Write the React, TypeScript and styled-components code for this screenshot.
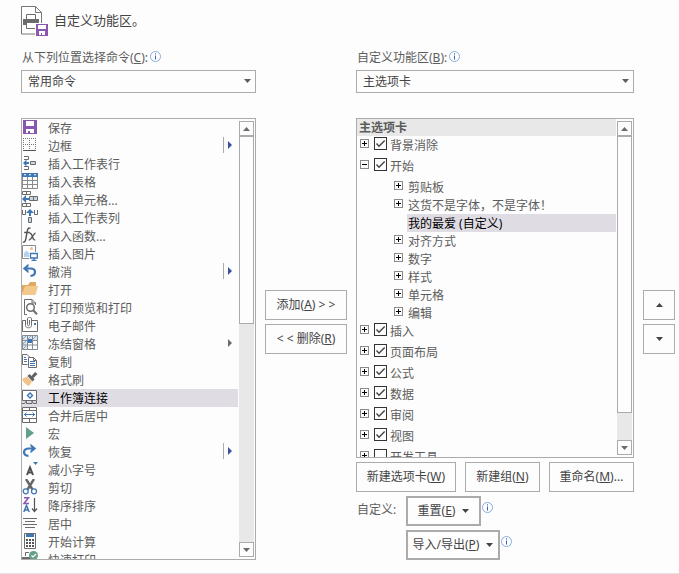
import React, { useState } from 'react';
import styled, { createGlobalStyle, css } from 'styled-components';

const GlobalStyle = createGlobalStyle`
  *, *::before, *::after { box-sizing: border-box; }
  body {
    margin: 0;
    background: #fdfdfd;
    color: #5c5c5c;
    font: 12px/18px "Noto Sans", "Noto Sans CJK SC", sans-serif;
  }
  button, select, input { font: inherit; margin: 0; }
`;

const line = '#ababab';
const blue = '#3f76b5';
const gray = '#6b6b6b';
const purple = '#8a57b0';

/* ---------- layout ---------- */

const Page = styled.main`
  display: flex;
  flex-direction: column;
  height: 100vh;
  min-height: 440px;
  padding: 6px 4px 13px 21px;
  border-bottom: 1px solid #e3e3e3;
`;

const Header = styled.header`
  display: flex;
  gap: 6px;
  height: 30px;
  margin-bottom: 12px;
`;

const Title = styled.h1`
  margin: 0;
  font-size: 13px;
  font-weight: 400;
  line-height: 28px;
  color: #444;
`;

const Columns = styled.div`
  flex: 1;
  min-height: 0;
  display: grid;
  grid-template-columns: minmax(0, 235fr) 82px minmax(0, 278fr) 32px;
  grid-template-rows: minmax(0, 1fr);
  column-gap: 9px;
`;

const Column = styled.section`
  display: flex;
  flex-direction: column;
  min-height: 0;
`;

const MidColumn = styled.div`
  display: flex;
  flex-direction: column;
  justify-content: center;
  gap: 4px;
  padding-top: 36px;
`;

const LabelRow = styled.div`
  display: flex;
  align-items: flex-start;
  gap: 2px;
  height: 22px;
  padding-left: 1px;
  line-height: 20px;
`;

const InfoButton = styled.button`
  display: flex;
  flex: none;
  padding: 0;
  border: 0;
  margin-top: 3px;
  background: none;
`;

const SelectBox = styled.div`
  position: relative;
  height: 23px;
  margin-bottom: 25px;
  flex: none;

  svg {
    position: absolute;
    right: 5px;
    top: 9px;
    pointer-events: none;
  }
`;

const Select = styled.select`
  appearance: none;
  display: block;
  width: 100%;
  height: 100%;
  padding: 0 20px 0 6px;
  border: 1px solid ${line};
  border-radius: 0;
  background: #fdfdfd;
  color: #444;
`;

/* ---------- lists ---------- */

const Panel = styled.div`
  flex: 1;
  min-height: 0;
  display: flex;
  border: 1px solid ${line};
  background: #fdfdfd;
`;

const Items = styled.ul`
  flex: 1;
  min-width: 0;
  margin: 0;
  padding: 0;
  list-style: none;
  overflow: hidden;
`;

const highlighted = css`
  background: #dfdde3;
  color: #000;
`;

const Command = styled.li<{ $selected: boolean }>`
  display: flex;
  height: 18px;
  padding-right: 6px;
  line-height: 20px;
  white-space: nowrap;
  cursor: default;
  ${(p) => p.$selected && highlighted}
`;

const CommandName = styled.span`
  flex: 1;
  padding-left: 10px;
`;

const Flyout = styled.span<{ $split: boolean }>`
  display: flex;
  align-items: center;
  height: 16px;
  padding-left: 4px;
  border-left: 1px solid ${(p) => (p.$split ? line : 'transparent')};
  color: ${(p) => (p.$split ? '#3c50a0' : '#6b6b6b')};
`;

const Bar = styled.div`
  display: flex;
  flex-direction: column;
  width: 15px;
  margin: 2px 1px 2px 1px;
  background: #e8e8e8;
`;

const BarButton = styled.button`
  display: flex;
  align-items: center;
  justify-content: center;
  flex: none;
  width: 15px;
  height: 15px;
  padding: 0;
  border: 1px solid ${line};
  background: #fdfdfd;
  color: #6b6b6b;
`;

const Thumb = styled.div<{ $share: number }>`
  flex: ${(p) => p.$share} 1 0;
  border: 1px solid ${line};
  background: #fdfdfd;
`;

const Track = styled.div<{ $share: number }>`
  flex: ${(p) => p.$share} 1 0;
`;

const TreeHeader = styled.li`
  height: 17px;
  padding-left: 2px;
  background: #e8e8e8;
  font-weight: 700;
  line-height: 17px;
`;

const TabRow = styled.div`
  display: flex;
  align-items: flex-start;
  height: 21px;
  padding: 1px 0 0 3px;
`;

const TabLabel = styled.label`
  display: flex;
  align-items: flex-start;
  gap: 3px;
  margin-left: 5px;
  line-height: 17px;
`;

const Check = styled.input`
  appearance: none;
  width: 13px;
  height: 13px;
  border: 1px solid #333;
  background: #fdfdfd center / 11px 11px no-repeat;

  &:checked {
    background-image: url("data:image/svg+xml,%3Csvg xmlns='http://www.w3.org/2000/svg' viewBox='0 0 11 11'%3E%3Cpath d='M1.5 5.5L4 8.2L9.7 2.4' fill='none' stroke='%23444' stroke-width='1.4'/%3E%3C/svg%3E");
  }
`;

const Groups = styled.ul`
  margin: 0;
  padding: 0 0 0 37px;
  list-style: none;
`;

const GroupRow = styled.li`
  display: flex;
  align-items: flex-start;
  height: 18px;
`;

const GroupName = styled.span<{ $selected: boolean }>`
  flex: 1;
  height: 18px;
  margin-left: 4px;
  padding-left: 1px;
  line-height: 20px;
  white-space: nowrap;
  ${(p) => p.$selected && highlighted}
`;

const Expander = styled.button<{ $open?: boolean; $gap: number }>`
  flex: none;
  width: 9px;
  height: 9px;
  margin-top: ${(p) => p.$gap}px;
  padding: 0;
  border: 1px solid #8a8a8a;
  background:
    linear-gradient(#000, #000) center / 5px 1px no-repeat,
    linear-gradient(#000, #000) center / 1px ${(p) => (p.$open ? 0 : 5)}px no-repeat,
    #fdfdfd;
`;

const ExpanderSpace = styled.span`
  flex: none;
  width: 9px;
`;

/* ---------- buttons ---------- */

const Button = styled.button<{ $thick?: boolean; $grow?: number }>`
  display: flex;
  align-items: center;
  justify-content: center;
  gap: 7px;
  flex: ${(p) => (p.$grow ? `${p.$grow} 1 0` : 'none')};
  height: 30px;
  padding: 0 ${(p) => (p.$thick ? 4 : 0)}px;
  border: ${(p) => (p.$thick ? 2 : 1)}px solid ${line};
  background: #fdfdfd;
  color: #444;
  white-space: nowrap;
`;

const MenuButton = styled(Button)<{ $wide?: boolean }>`
  width: ${(p) => (p.$wide ? 94 : 75)}px;
`;

const Actions = styled.div`
  display: flex;
  gap: 9px;
  margin: 4px 0;
`;

const Customize = styled.div`
  display: grid;
  grid-template-columns: 50px 1fr;
  row-gap: 4px;
`;

const CustomizeLabel = styled.span`
  padding-left: 1px;
  line-height: 28px;
`;

const MenuLine = styled.div`
  grid-column: 2;
  display: flex;
  align-items: flex-start;
  gap: 1px;

  ${InfoButton} { margin-top: 6px; }
`;

/* ---------- drawings ---------- */

const Caret = ({ up = false }: { up?: boolean }) => (
  <svg width="7" height="4" viewBox="0 0 7 4" aria-hidden>
    <path d={up ? 'M0 4L3.5 0L7 4z' : 'M0 0H7L3.5 4z'} fill="currentColor" />
  </svg>
);

const SideCaret = () => (
  <svg width="4" height="8" viewBox="0 0 4 8" aria-hidden>
    <path d="M0 0L4 4L0 8z" fill="currentColor" />
  </svg>
);

const Info = () => (
  <InfoButton type="button" aria-label="信息">
    <svg width="11" height="11" viewBox="0 0 11 11" aria-hidden>
      <circle cx="5.5" cy="5.5" r="5" fill="#fff" stroke="#86aedb" />
      <path d="M5.5 4.5V8.5M5.5 2.3V3.5" stroke="#3f62a8" />
    </svg>
  </InfoButton>
);

const HeaderIcon = () => (
  <svg width="27" height="30" viewBox="0 0 27 30" aria-hidden>
    <path d="M15 28H.5V.5H14.5L20.5 6.5V18M14.5.5V6.5H20.5" fill="#fff" stroke="#777" />
    <path d="M5.5 13V8.5H14.5V13" fill="#fff" stroke="#6b6b6b" />
    <path d="M2 13H18V19H2z" fill="#6b6b6b" />
    <path d="M5.5 16.5H14.5V22.5H5.5z" fill="#fff" stroke="#6b6b6b" />
    <path d="M14 17H27V30H14z" fill="#fff" />
    <path d="M15 18H27V30H15z" fill={purple} />
    <path d="M17 19H25V23H17zM18 25H24V29H21V27H20V29H18z" fill="#fff" />
  </svg>
);

const drawings: Record<string, React.ReactNode> = {
  save: (
    <>
      <path d="M1 1H15V15H1z" fill={purple} />
      <path d="M4 2H12V7H4zM4 10H12V14H8V12H6V14H4z" fill="#fff" />
    </>
  ),
  border: (
    <>
      <path d="M1 1.5H14M1 7.5H14M1.5 1V13M7.5 1V13M13.5 1V13" stroke="#777" strokeDasharray="1 1" fill="none" />
      <path d="M1 13.5H14" stroke="#555" />
    </>
  ),
  rows: (
    <>
      <path d="M2 1.5H6.5V4.5H2M2 11.5H6.5V14.5H2" fill="none" stroke={gray} />
      <path d="M8.5 6.5H13.5V9.5H8.5z" fill="#c8d6e6" stroke={gray} />
      <path d="M1 8L4.5 4.500V7H7V9H4.500V11.500z" fill={blue} />
    </>
  ),
  table: (
    <>
      <path d="M.5 3V15.5H15.5V3M0 7.5H16M0 11.5H16M5.5 4V16M10.5 4V16" fill="none" stroke="#8a8a8a" />
      <path d="M0 0H16V4H0z" fill={blue} />
      <path d="M2 1H4L3 3zM7 1H9L8 3zM12 1H14L13 3z" fill="#fff" />
    </>
  ),
  cells: (
    <>
      <path d="M.5 3.5V.5H8.5V3.5H.5M4.5 .5V3.5M.5 12.5H8.5V15.5H.5zM4.5 12V16" fill="none" stroke={gray} />
      <path d="M7.5 5.5H15.5V9.5H7.5z" fill="#c8d6e6" stroke={gray} />
      <path d="M11.5 5V10" stroke={gray} />
      <path d="M0 8L4 4V7H7V9H4V12z" fill={blue} />
    </>
  ),
  columns: (
    <>
      <path d="M.5 1V5.5H3.5V1M12.5 1V5.5H15.5V1" fill="none" stroke={gray} />
      <path d="M6.5 8.5H9.5V13.5H6.5z" fill="#c8d6e6" stroke={gray} />
      <path d="M8 0L12 4H9V7H7V4H4z" fill={blue} />
    </>
  ),
  fx: (
    <>
      <path d="M8.5 1.4C6.5 .2 5.600 2 5.200 4.500L3.800 12C3.300 14.800 2.200 15.600 .8 14.800M2.200 5.500H7.800" fill="none" stroke="#555" strokeWidth="1.400" />
      <path d="M7.500 6.300C10.300 5 10.300 14 13.300 12.800M13.600 6.100C11.500 5.800 9.500 13.600 6.800 12.900" fill="none" stroke="#555" strokeWidth="1.400" />
    </>
  ),
  picture: (
    <>
      <path d="M7 13.5H.5V.5H13.5V7" fill="#fff" stroke="#8a8a8a" />
      <path d="M2 12V8L4.500 5.500L7 8V12z" fill="#b9d0ea" />
      <circle cx="9.500" cy="3.500" r="1.500" fill="#efbd85" />
      <path d="M8.500 8.500H15.300V13H8.500zM12 13V15.300M9.500 15.300H14.500" fill="#fff" stroke={blue} strokeWidth="1.300" />
    </>
  ),
  undo: (
    <>
      <path d="M.8 5.500L6.500 .8V3.500L4.500 5.500L6.500 7.500V10.200z" fill={blue} />
      <path d="M3 5.500H8.500C14.500 5.500 14.500 12.500 8.500 13" fill="none" stroke={blue} strokeWidth="2.200" />
    </>
  ),
  redo: (
    <>
      <path d="M14.200 5.500L8.500 .8V3.500L10.500 5.500L8.500 7.500V10.200z" fill={blue} />
      <path d="M12 5.500H7C.5 5.500 .5 12.500 6.500 13" fill="none" stroke={blue} strokeWidth="2.200" />
    </>
  ),
  open: (
    <>
      <path d="M0 13V4H6L8 1H14V6H4z" fill="#e0a860" />
      <path d="M0 14L3 5H16L13.500 14z" fill="#f3c98b" />
    </>
  ),
  preview: (
    <>
      <path d="M5 15.5H2.5V.5H10L13.5 4V6M10 .5V4H13.5" fill="none" stroke={gray} />
      <circle cx="8.500" cy="8.500" r="3.800" fill="#fff" stroke={gray} strokeWidth="1.500" />
      <path d="M11 11L15 15.200" stroke={gray} strokeWidth="2" />
    </>
  ),
  mail: (
    <>
      <path d="M3 3.5H.5V14.5H15.5V3.5H10" fill="none" stroke={gray} />
      <path d="M3.500 3V8.500C3.500 11.500 9.500 11.500 9.500 8.500V2C9.500 -.5 5.500 -.5 5.500 2V7.500C5.500 9 7.500 9 7.500 7.500V3" fill="none" stroke={gray} />
      <path d="M12 6H14V8H12z" fill={blue} />
    </>
  ),
  freeze: (
    <>
      <path d="M0 0H16V5H5V15H0z" fill="#dce6f1" />
      <path d="M.5 .5H15.5V14.5H.5zM0 5.5H16M0 10H16M5.5 0V15M10.5 0V15" fill="none" stroke="#858b94" />
      <path d="M1 4L4 1M6 4L9 1M11 4L14 1M1 9L4 6M1 14L4 11" stroke="#8fa5be" />
      <path d="M6 4H10V8H6z" fill={blue} />
    </>
  ),
  copy: (
    <>
      <path d="M5.5 11.5H.5V1.5H5L7.5 4" fill="#fff" stroke={gray} />
      <path d="M6.5 4.5H11.5L14.5 7.5V14.5H6.5zM11.5 4.5V7.5H14.5" fill="#fff" stroke={gray} />
      <path d="M2 4.5H4M2 6.5H5M2 8.5H5M8 8.5H13M8 10.5H13M8 12.5H13" stroke={blue} />
    </>
  ),
  brush: (
    <>
      <path d="M0 8L5 5.500L10 10.500L7 15C4 14 1 11 0 8z" fill="#efc488" />
      <path d="M5.500 5L7.500 3L9.500 5L13 1L15.500 3L11.500 7L12.500 8.500L10.500 10.500z" fill="#626262" />
    </>
  ),
  connect: (
    <>
      <path d="M.5 1.5H14.5V11.5H.5z" fill="#fff" stroke={gray} />
      <path d="M0 14.5H2.500L4.500 12M4.500 12V14.500H10V12M10 12L11.500 14.500H14.500V12" fill="none" stroke={gray} />
      <path d="M8 3L11.500 6.500L8 10L4.500 6.500z" fill={blue} />
      <path d="M8 5L9.500 6.500L8 8L6.500 6.500z" fill="#fff" />
    </>
  ),
  merge: (
    <>
      <path d="M.5 .5H14.5V15.5H.5zM0 3.5H15M0 11.5H15M7.5 0V3M7.5 12V16" fill="#fff" stroke={gray} />
      <path d="M2 7.5H13M4.500 5.500L2.500 7.500L4.500 9.500M10.500 5.500L12.500 7.500L10.500 9.500" fill="none" stroke={blue} />
    </>
  ),
  macro: <path d="M4 2L12 8L4 14z" fill="#62a087" />,
  shrink: (
    <>
      <path d="M5 14L8 6.500L11 14M6 11.500H10" fill="none" stroke="#505050" strokeWidth="2" />
      <path d="M11 1H16L13.500 4z" fill={blue} />
    </>
  ),
  cut: (
    <>
      <path d="M4 0L10.500 10.500M12 0L5.500 10.500" stroke="#666" strokeWidth="2.400" />
      <circle cx="3.700" cy="12.300" r="2.500" fill="none" stroke={blue} strokeWidth="1.300" />
      <circle cx="12" cy="12.300" r="2.500" fill="none" stroke={blue} strokeWidth="1.300" />
    </>
  ),
  sort: (
    <>
      <path d="M2 .8H6.500L2 6.500H7" fill="none" stroke={purple} strokeWidth="1.500" />
      <path d="M1.800 15L4.500 8.500L7.200 15M2.700 13H6.300" fill="none" stroke={blue} strokeWidth="1.500" />
      <path d="M12.500 1V14.500M10 11.500L12.500 14.500L15 11.500" fill="none" stroke="#555" strokeWidth="1.200" />
    </>
  ),
  center: <path d="M1 3.5H15M3 6.5H13M1 9.5H15M3 12.5H13" stroke={gray} />,
  calc: (
    <>
      <path d="M2.5 .5H13.5V15.5H2.5z" fill="#fff" stroke={gray} />
      <path d="M4 1H12V4H4z" fill={blue} />
      <path d="M4 7H12M4 10H12M4 13H12" stroke="#555" strokeWidth="2" strokeDasharray="2 1" />
    </>
  ),
  quick: (
    <>
      <path d="M3.500 5V1.500H7" fill="none" stroke={gray} />
      <path d="M0 6H9V12H0z" fill={gray} />
      <circle cx="11.500" cy="4.500" r="4.500" fill="#62a087" />
      <path d="M9.500 4.500L11 6L14 3" fill="none" stroke="#fff" strokeWidth="1.200" />
    </>
  ),
};

const CommandIcon = ({ name }: { name: string }) => (
  <svg width="16" height="16" viewBox="0 0 16 16" aria-hidden>
    {drawings[name]}
  </svg>
);

/* ---------- data ---------- */

const commands: { icon: string; name: string; menu?: 'split' | 'plain' }[] = [
  { icon: 'save', name: '保存' },
  { icon: 'border', name: '边框', menu: 'split' },
  { icon: 'rows', name: '插入工作表行' },
  { icon: 'table', name: '插入表格' },
  { icon: 'cells', name: '插入单元格...' },
  { icon: 'columns', name: '插入工作表列' },
  { icon: 'fx', name: '插入函数...' },
  { icon: 'picture', name: '插入图片' },
  { icon: 'undo', name: '撤消', menu: 'split' },
  { icon: 'open', name: '打开' },
  { icon: 'preview', name: '打印预览和打印' },
  { icon: 'mail', name: '电子邮件' },
  { icon: 'freeze', name: '冻结窗格', menu: 'plain' },
  { icon: 'copy', name: '复制' },
  { icon: 'brush', name: '格式刷' },
  { icon: 'connect', name: '工作簿连接' },
  { icon: 'merge', name: '合并后居中' },
  { icon: 'macro', name: '宏' },
  { icon: 'redo', name: '恢复', menu: 'split' },
  { icon: 'shrink', name: '减小字号' },
  { icon: 'cut', name: '剪切' },
  { icon: 'sort', name: '降序排序' },
  { icon: 'center', name: '居中' },
  { icon: 'calc', name: '开始计算' },
  { icon: 'quick', name: '快速打印' },
];

const homeGroups = [
  '剪贴板',
  '这货不是字体，不是字体！',
  '我的最爱 (自定义)',
  '对齐方式',
  '数字',
  '样式',
  '单元格',
  '编辑',
];

const tabs: { name: string; on: boolean; groups?: string[] }[] = [
  { name: '背景消除', on: true },
  { name: '开始', on: true, groups: homeGroups },
  { name: '插入', on: true },
  { name: '页面布局', on: true },
  { name: '公式', on: true },
  { name: '数据', on: true },
  { name: '审阅', on: true },
  { name: '视图', on: true },
  { name: '开发工具', on: false },
];

/* ---------- parts ---------- */

const ScrollBar = ({ share }: { share: number }) => (
  <Bar>
    <BarButton type="button" aria-label="向上滚动"><Caret up /></BarButton>
    <Thumb $share={share} />
    <Track $share={100 - share} />
    <BarButton type="button" aria-label="向下滚动"><Caret /></BarButton>
  </Bar>
);

const Picker = ({ id, value }: { id: string; value: string }) => (
  <SelectBox>
    <Select id={id} defaultValue={value}>
      <option>{value}</option>
    </Select>
    <Caret />
  </SelectBox>
);

const CommandList = () => {
  const [selected, setSelected] = useState('工作簿连接');
  return (
    <Panel>
      <Items role="listbox" aria-label="常用命令">
        {commands.map((c) => (
          <Command
            key={c.name}
            role="option"
            aria-selected={c.name === selected}
            $selected={c.name === selected}
            onClick={() => setSelected(c.name)}
          >
            <CommandIcon name={c.icon} />
            <CommandName>{c.name}</CommandName>
            {c.menu && <Flyout $split={c.menu === 'split'}><SideCaret /></Flyout>}
          </Command>
        ))}
      </Items>
      <ScrollBar share={46} />
    </Panel>
  );
};

const TabTree = () => {
  const [open, setOpen] = useState(true);
  const [selected, setSelected] = useState('我的最爱 (自定义)');
  return (
    <Panel>
      <Items aria-label="主选项卡">
        <TreeHeader>主选项卡</TreeHeader>
        {tabs.map((tab) => {
          const expanded = Boolean(tab.groups) && open;
          return (
            <li key={tab.name}>
              <TabRow>
                <Expander
                  type="button"
                  $gap={2}
                  $open={expanded}
                  aria-expanded={expanded}
                  aria-label={tab.name}
                  onClick={() => tab.groups && setOpen(!open)}
                />
                <TabLabel>
                  <Check type="checkbox" defaultChecked={tab.on} />
                  {tab.name}
                </TabLabel>
              </TabRow>
              {expanded && (
                <Groups>
                  {tab.groups!.map((g) => (
                    <GroupRow key={g} onClick={() => setSelected(g)}>
                      {g.includes('自定义') ? (
                        <ExpanderSpace />
                      ) : (
                        <Expander type="button" $gap={3} aria-label={g} />
                      )}
                      <GroupName $selected={g === selected}>{g}</GroupName>
                    </GroupRow>
                  ))}
                </Groups>
              )}
            </li>
          );
        })}
      </Items>
      <ScrollBar share={91} />
    </Panel>
  );
};

export default function App() {
  return (
    <>
      <GlobalStyle />
      <Page>
        <Header>
          <HeaderIcon />
          <Title>自定义功能区。</Title>
        </Header>
        <Columns>
          <Column>
            <LabelRow>
              <label htmlFor="source">从下列位置选择命令(<u>C</u>):</label>
              <Info />
            </LabelRow>
            <Picker id="source" value="常用命令" />
            <CommandList />
          </Column>

          <MidColumn>
            <Button type="button"><span>添加(<u>A</u>) &gt; &gt;</span></Button>
            <Button type="button"><span>&lt; &lt; 删除(<u>R</u>)</span></Button>
          </MidColumn>

          <Column>
            <LabelRow>
              <label htmlFor="target">自定义功能区(<u>B</u>):</label>
              <Info />
            </LabelRow>
            <Picker id="target" value="主选项卡" />
            <TabTree />
            <Actions>
              <Button type="button" $grow={100}><span>新建选项卡(<u>W</u>)</span></Button>
              <Button type="button" $grow={75}><span>新建组(<u>N</u>)</span></Button>
              <Button type="button" $grow={85}><span>重命名(<u>M</u>)...</span></Button>
            </Actions>
            <Customize>
              <CustomizeLabel>自定义:</CustomizeLabel>
              <MenuLine>
                <MenuButton type="button" $thick><span>重置(<u>E</u>)</span><Caret /></MenuButton>
                <Info />
              </MenuLine>
              <MenuLine>
                <MenuButton type="button" $thick $wide><span>导入/导出(<u>P</u>)</span><Caret /></MenuButton>
                <Info />
              </MenuLine>
            </Customize>
          </Column>

          <MidColumn>
            <Button type="button" aria-label="上移"><Caret up /></Button>
            <Button type="button" aria-label="下移"><Caret /></Button>
          </MidColumn>
        </Columns>
      </Page>
    </>
  );
}
